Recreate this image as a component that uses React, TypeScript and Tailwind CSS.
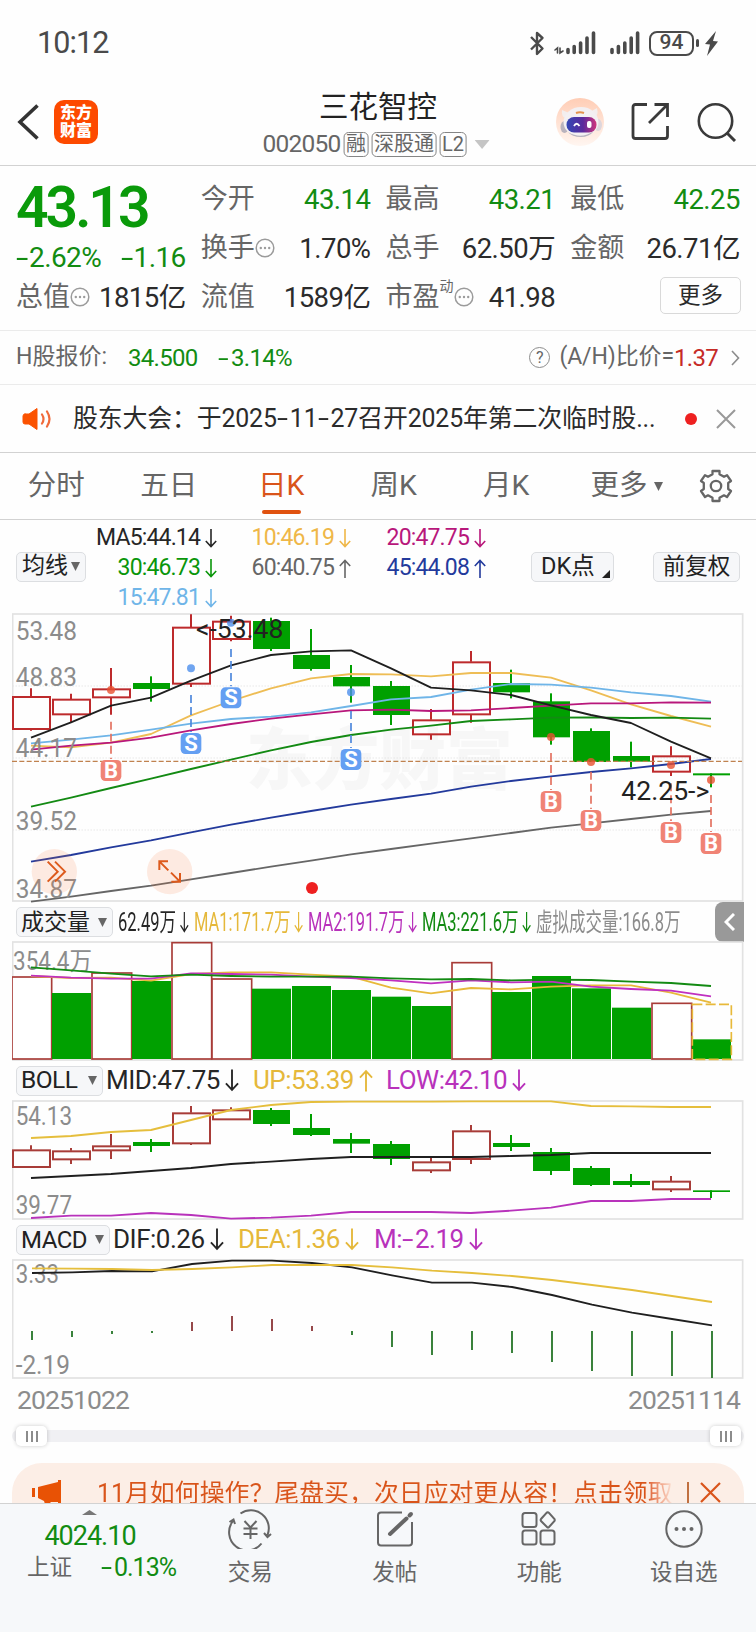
import React from 'react';

type Candle = [up: boolean, high: number, top: number, bottom: number, low: number];

// Chart drawings use a grid of three units per pixel.
const STEP = 120;
const FIRST_X = 93;

const KLINE: Candle[] = [
    [true, 250, 274, 372, 377],
    [true, 266, 282, 328, 352],
    [true, 189, 251, 277, 329],
    [false, 214, 234, 252, 290],
    [true, 28, 66, 236, 246],
    [true, 32, 48, 102, 109],
    [false, 38, 48, 132, 138],
    [false, 72, 150, 192, 197],
    [false, 180, 216, 244, 293],
    [false, 228, 243, 330, 360],
    [true, 312, 344, 388, 404],
    [true, 138, 170, 328, 353],
    [false, 194, 234, 262, 280],
    [false, 265, 289, 397, 419],
    [false, 370, 378, 471, 471],
    [false, 410, 453, 470, 487],
    [true, 424, 452, 500, 513],
    [false, 505, 505, 511, 547],
];

const MA_LINES = [
    { color: '#eebd55', values: [422, 427, 413, 387, 331, 288, 250, 220, 207, 208, 214, 204, 204, 218, 256, 298, 333, 365] },
    { color: '#6fb5e8', values: [415, 404, 391, 374, 356, 342, 335, 322, 303, 283, 276, 254, 237, 239, 248, 262, 273, 290] },
    { color: '#b8177b', values: [434, 422, 413, 398, 376, 357, 341, 328, 316, 314, 318, 316, 309, 302, 295, 295, 292, 293] },
    { color: '#138a13', values: [605, 578, 549, 521, 492, 464, 436, 411, 390, 374, 362, 348, 343, 338, 337, 339, 338, 341] },
    { color: '#233a9c', values: [770, 750, 727, 706, 682, 659, 638, 618, 599, 582, 566, 545, 528, 514, 501, 490, 477, 462] },
    { color: '#666666', values: [890, 875, 858, 842, 823, 804, 785, 767, 748, 732, 716, 700, 684, 668, 655, 642, 629, 618] },
    { color: '#1f1f1f', values: [398, 352, 302, 278, 227, 181, 150, 139, 136, 190, 248, 256, 270, 301, 330, 354, 410, 460] },
];

const SIGNALS = [
    { day: 2, kind: 'B', dot: 255, from: 350, box: 465 },
    { day: 4, kind: 'S', dot: 190, from: 270, box: 384 },
    { day: 5, kind: 'S', dot: 53, from: 132, box: 247 },
    { day: 8, kind: 'S', dot: 262, from: 318, box: 432 },
    { day: 13, kind: 'B', dot: 396, from: 444, box: 558 },
    { day: 14, kind: 'B', dot: 471, from: 500, box: 615 },
    { day: 16, kind: 'B', dot: 480, from: 535, box: 651 },
    { day: 17, kind: 'B', dot: 525, from: 570, box: 684 },
];

const VOLUMES: [boolean, number][] = [
    [true, 231], [false, 279], [true, 219], [false, 243], [true, 128], [true, 237],
    [false, 266], [false, 258], [false, 270], [false, 290], [false, 318], [true, 188],
    [false, 276], [false, 228], [false, 265], [false, 323], [true, 310], [false, 418],
];

const VOLUME_LINES = [
    { color: '#e8b93a', values: [228, 234, 233, 242, 222, 217, 217, 224, 230, 263, 280, 264, 268, 260, 256, 256, 278, 308] },
    { color: '#c030c0', values: [227, 233, 236, 236, 220, 222, 224, 230, 234, 241, 250, 241, 247, 245, 260, 267, 272, 289] },
    { color: '#138a13', values: [202, 211, 221, 229, 224, 228, 230, 230, 230, 235, 238, 237, 241, 239, 240, 245, 249, 258] },
];

const BOLL_CANDLES: Candle[] = [
    [true, 736, 749, 801, 801],
    [true, 744, 752, 778, 792],
    [true, 702, 737, 751, 777],
    [false, 717, 726, 738, 756],
    [true, 618, 638, 730, 735],
    [true, 622, 629, 658, 658],
    [false, 624, 630, 672, 678],
    [false, 642, 684, 705, 708],
    [false, 699, 717, 731, 759],
    [false, 723, 732, 777, 795],
    [true, 770, 785, 811, 819],
    [true, 675, 692, 777, 792],
    [false, 705, 729, 741, 753],
    [false, 744, 756, 813, 825],
    [false, 798, 804, 855, 858],
    [false, 822, 843, 855, 861],
    [true, 828, 843, 868, 876],
    [false, 871, 871, 876, 894],
];

const BOLL_LINES = [
    { color: '#e5be3c', values: [714, 708, 696, 690, 660, 630, 615, 606, 605, 605, 605, 604, 604, 604, 618, 619, 621, 621] },
    { color: '#1f1f1f', values: [834, 828, 822, 813, 804, 792, 785, 777, 771, 771, 771, 771, 768, 765, 759, 759, 759, 759] },
    { color: '#b832bb', values: [954, 947, 947, 939, 945, 956, 953, 947, 936, 936, 936, 939, 932, 923, 903, 903, 897, 897] },
];

const MACD_LINES = [
    { color: '#1f1f1f', values: [159, 157, 153, 154, 132, 122, 122, 129, 142, 166, 188, 188, 201, 225, 254, 278, 297, 316] },
    { color: '#e5be3c', values: [145, 146, 147, 150, 147, 142, 135, 135, 135, 142, 152, 159, 168, 180, 195, 210, 228, 246] },
];

const MACD_BARS = [360, 351, 342, 339, 306, 288, 297, 318, 345, 381, 405, 390, 399, 426, 453, 468, 468, 474];

const TABS = ['分时', '五日', '日K', '周K', '月K'];

const Line = ({ values, color, offset = FIRST_X, width = 5.5 }: { values: number[]; color: string; offset?: number; width?: number }) => (
    <polyline
        points={values.map((v, i) => `${offset + i * STEP},${v}`).join(' ')}
        fill="none"
        stroke={color}
        strokeWidth={width}
        strokeLinejoin="round"
    />
);

const Candles = ({ data, red }: { data: Candle[]; red: string }) => (
    <g>
        {data.map(([up, high, top, bottom, low], i) => {
            const x = FIRST_X + i * STEP;
            return up ? (
                <g key={i} stroke={red} strokeWidth={6} fill="none">
                    <path d={`M${x} ${high}V${top}M${x} ${bottom}V${low}`} />
                    <rect x={x - 54} y={top + 2} width={111} height={bottom - top - 2} />
                </g>
            ) : (
                <g key={i} fill="#00a000">
                    <rect x={x - 54} y={top} width={111} height={bottom - top} />
                    <rect x={x - 3} y={high} width={6} height={low - high} />
                </g>
            );
        })}
    </g>
);

const ChartText = ({ x, y, w, children, color = '#8c8c8c' }: { x: number; y: number; w: number; children: string; color?: string }) => (
    <text x={x} y={y} textLength={w} lengthAdjust="spacingAndGlyphs" fontSize={75} fill={color}>
        {children}
    </text>
);

const Arrow = ({ up = false, w = 12, h = 19 }: { up?: boolean; w?: number; h?: number }) => (
    <svg width={w} height={h} viewBox="0 0 12 19" className={up ? 'ml-[5px] shrink-0' : 'ml-[5px] shrink-0 rotate-180'} fill="none" stroke="currentColor" strokeWidth="1.6">
        <path d="M6 19V1.5M.8 7L6 1.5L11.2 7" />
    </svg>
);

// Roboto's hyphen is short, so the sign is stretched to a minus.
const Minus = () => <span className="inline-block w-[13px] origin-left scale-x-[1.6]">-</span>;

const InfoDot = () => (
    <svg width="20" height="20" viewBox="0 0 20 20" className="mt-[-2px] shrink-0" fill="none" stroke="#9b9b9b" strokeWidth="1.5">
        <circle cx="10" cy="10" r="8.8" />
        <g fill="#9b9b9b" stroke="none">
            <circle cx="5.8" cy="10" r="1.2" />
            <circle cx="10" cy="10" r="1.2" />
            <circle cx="14.2" cy="10" r="1.2" />
        </g>
    </svg>
);

const Triangle = ({ color = '#666', w = 9, h = 9 }: { color?: string; w?: number; h?: number }) => (
    <svg width={w} height={h} viewBox="0 0 10 10" preserveAspectRatio="none" className="shrink-0">
        <path d="M0 0H10L5 10Z" fill={color} />
    </svg>
);

const Quote = ({ label, value, extra, green = false }: { label: string; value: string; extra?: React.ReactNode; green?: boolean }) => (
    <div className="flex h-[49px] items-center justify-between whitespace-nowrap">
        <span className="flex items-center text-[27px] text-[#666]">
            {label}
            {extra}
        </span>
        <span className={green ? 'text-[27.5px] tracking-[-0.5px] text-[#128c12]' : 'text-[27.5px] tracking-[-0.5px] text-[#2b2b2b]'}>{value}</span>
    </div>
);

const StatusBar = () => (
    <div className="flex h-[86px] shrink-0 items-center justify-between pr-[38px] pl-[37px] text-[#4a4a4a]">
        <span className="text-[30.5px] tracking-[-0.9px]">10:12</span>
        <div className="flex items-center">
            <svg width="16" height="25" viewBox="0 0 16 25" fill="none" stroke="currentColor" strokeWidth="2.4" strokeLinejoin="round">
                <path d="M2 6L13.5 17.5L8 23V2L13.5 7L2 18.5" />
            </svg>
            <svg width="43" height="24" viewBox="0 0 43 24" className="ml-[9px]" fill="none" stroke="currentColor" strokeLinecap="round">
                <path d="M1 19L3.5 17V22M6 17V22L9 20" strokeWidth="1.6" />
                <path d="M14 18.5V21.5M20.2 15.5V21.5M26.6 12V21.5M33 7V21.5M39.5 2V21.5" strokeWidth="3.6" />
            </svg>
            <svg width="31" height="24" viewBox="0 0 31 24" className="ml-[13px]" fill="none" stroke="currentColor" strokeLinecap="round">
                <path d="M2 18.5V21.5M8.4 15.5V21.5M14.8 12V21.5M21.2 7V21.5M27.6 2V21.5" strokeWidth="3.6" />
            </svg>
            <span className="ml-[8px] flex h-[25px] w-[45px] items-center justify-center rounded-[8px] border-2 border-[#4a4a4a] text-[21px] font-medium">94</span>
            <span className="ml-[2px] h-[8px] w-[3px] rounded bg-[#4a4a4a]" />
            <svg width="13" height="25" viewBox="0 0 13 25" className="ml-[6px]" fill="currentColor">
                <path d="M11 0L0 13L5 13.5L2 25L13 10.5L8 10Z" />
            </svg>
        </div>
    </div>
);

const Tag = ({ children }: { children: string }) => (
    <span className="flex h-[25px] items-center rounded-[5px] border-[1.5px] border-[#858585] px-[1.5px] text-[20px] leading-none text-[#666]">{children}</span>
);

const Header = () => (
    <header className="relative flex h-[80px] shrink-0 items-center border-b border-[#d2d2d2] px-[17px]">
        <svg width="22" height="36" viewBox="0 0 22 36" className="mt-[-8px]" fill="none" stroke="#333" strokeWidth="3.6">
            <path d="M20.5 1.5L3 18L20.5 34.5" />
        </svg>
        <div className="mt-[-8px] ml-[15px] flex h-[44px] w-[44px] flex-col items-center justify-center rounded-[10px] bg-[#fd4a00] text-[16px] leading-[18px] font-black text-white">
            <span>东方</span>
            <span>财富</span>
        </div>
        <div className="absolute top-[2px] left-1/2 flex -translate-x-1/2 flex-col items-center">
            <h1 className="h-[41px] text-[29.5px] leading-[38px] font-normal text-[#222]">三花智控</h1>
            <div className="ml-[-4px] flex items-center gap-[3px] whitespace-nowrap">
                <span className="text-[24.5px] leading-[30px] tracking-[-0.8px] text-[#666]">002050</span>
                <Tag>融</Tag>
                <Tag>深股通</Tag>
                <Tag>L2</Tag>
                <span className="ml-[5px]">
                    <Triangle color="#c5c5c5" w={15} h={9} />
                </span>
            </div>
        </div>
        <div className="mt-[-8px] mr-[2px] ml-auto flex items-center">
            <svg width="48" height="48" viewBox="0 0 48 48">
                <defs>
                    <linearGradient id="halo" x1="0" y1="0" x2="0" y2="1">
                        <stop offset="0" stopColor="#ffcdb5" />
                        <stop offset="1" stopColor="#fff6f1" />
                    </linearGradient>
                    <linearGradient id="visor">
                        <stop offset="0" stopColor="#3448b5" />
                        <stop offset="0.55" stopColor="#5b2a9c" />
                        <stop offset="1" stopColor="#d0347c" />
                    </linearGradient>
                </defs>
                <circle cx="24" cy="24" r="24" fill="url(#halo)" />
                <path d="M6 12Q5 19 10 20L13 15ZM41 10Q43 18 38 19L34 14Z" fill="#f3eeee" />
                <ellipse cx="8.5" cy="29" rx="4" ry="6" fill="#b9b3bd" />
                <ellipse cx="42" cy="27" rx="4" ry="6" fill="#ddd6dc" />
                <ellipse cx="25" cy="24" rx="17.5" ry="15" fill="#f3f0f2" />
                <path d="M12 34Q25 42 38 33Q33 39 25 39Q16 39 12 34Z" fill="#b7b3be" />
                <path d="M20 15Q24 13.5 28 15" stroke="#e3924e" strokeWidth="2" fill="none" />
                <rect x="10.5" y="19" width="30" height="15.5" rx="7.5" fill="url(#visor)" />
                <path d="M18 28Q20.5 23.5 23.5 28" stroke="#fff" strokeWidth="1.8" fill="none" />
                <rect x="31" y="23" width="4.5" height="7" rx="2" fill="#fff" />
            </svg>
            <svg width="39" height="39" viewBox="0 0 39 39" className="ml-[27px]" fill="none" stroke="#3a3a3a" strokeWidth="2.8">
                <path d="M16 2.5H4.5Q2 2.5 2 5V34Q2 36.500 4.5 36.5H34Q36.5 36.5 36.5 34V24M36.5 15V2.5H23.5M36.5 2.5L18 21" />
            </svg>
            <svg width="40" height="40" viewBox="0 0 40 40" className="ml-[27px]" fill="none" stroke="#3a3a3a" strokeWidth="2.6">
                <circle cx="18.5" cy="19" r="16.7" />
                <path d="M30 31L38 39" strokeWidth="3" />
            </svg>
        </div>
    </header>
);

const QuotePanel = () => (
    <section className="grid h-[165px] shrink-0 grid-cols-4 gap-x-[15px] border-b border-[#ebebeb] px-4 pt-[9px]">
        <div className="text-[#128c12]">
            <div className="flex h-[65px] items-center text-[57px] leading-none font-semibold tracking-[-3px] text-[#0a9a0a]">43.13</div>
            <div className="flex h-[33px] items-center justify-between pt-[3px] text-[28px] tracking-[-0.6px] whitespace-nowrap">
                <span><Minus />2.62%</span>
                <span><Minus />1.16</span>
            </div>
            <Quote label="总值" value="1815亿" extra={<InfoDot />} />
        </div>
        <div>
            <Quote label="今开" value="43.14" green />
            <Quote label="换手" value="1.70%" extra={<InfoDot />} />
            <Quote label="流值" value="1589亿" />
        </div>
        <div>
            <Quote label="最高" value="43.21" green />
            <Quote label="总手" value="62.50万" />
            <Quote
                label="市盈"
                value="41.98"
                extra={
                    <>
                        <sup className="top-[-12px] text-[14px]">动</sup>
                        <InfoDot />
                    </>
                }
            />
        </div>
        <div>
            <Quote label="最低" value="42.25" green />
            <Quote label="金额" value="26.71亿" />
            <button className="mt-[4px] mr-[-1px] ml-auto flex h-[37px] w-[81px] items-center justify-center rounded-[5px] border border-[#d9d9d9] text-[22.5px] text-[#2b2b2b]">更多</button>
        </div>
    </section>
);

const HShareRow = () => (
    <section className="flex h-[54px] shrink-0 items-center border-b border-[#ebebeb] pr-[16px] pl-[16px] text-[23px] whitespace-nowrap text-[#666]">
        <span className="w-[112px]">H股报价:</span>
        <span className="w-[90px] text-[24px] tracking-[-0.7px] text-[#128c12]">34.500</span>
        <span className="text-[24px] tracking-[-0.7px] text-[#128c12]"><Minus />3.14%</span>
        <span className="ml-auto flex h-[21px] w-[21px] items-center justify-center rounded-full border-[1.5px] border-[#8c8c8c] text-[16px]">?</span>
        <span className="ml-[9px] tracking-[-0.1px]">(A/H)比价=</span>
        <span className="text-[24px] tracking-[-0.7px] text-[#c62b26]">1.37</span>
        <svg width="9" height="16" viewBox="0 0 9 16" className="ml-[13px]" fill="none" stroke="#8c8c8c" strokeWidth="1.6">
            <path d="M1 1L7.5 8L1 15" />
        </svg>
    </section>
);

const NoticeRow = () => (
    <section className="flex h-[68px] shrink-0 items-center border-b border-[#d2d2d2] pr-[20px] pl-[22px] whitespace-nowrap">
        <svg width="30" height="24" viewBox="0 0 30 24" fill="none" stroke="#f06a3a" strokeWidth="2.2" strokeLinecap="round">
            <path d="M3 7H7L15 1.5V22.5L7 17H3Q1 17 1 15V9Q1 7 3 7Z" fill="#fb5200" stroke="#fb5200" strokeWidth="1" />
            <path d="M20 7.5Q23 12 20 16.5M25 4.5Q30 12 25 19.5" />
        </svg>
        <span className="ml-[21px] text-[24.9px] tracking-[-0.15px] text-[#2b2b2b]">
            股东大会：于2025<Minus />11<Minus />27召开2025年第二次临时股...
        </span>
        <span className="ml-auto h-[12px] w-[12px] rounded-full bg-[#ee2020]" />
        <svg width="20" height="20" viewBox="0 0 20 20" className="ml-[19px]" stroke="#999" strokeWidth="2">
            <path d="M1 1L19 19M19 1L1 19" />
        </svg>
    </section>
);

const TabBar = () => (
    <nav className="flex h-[67px] shrink-0 items-center border-b border-[#d2d2d2] pt-[1px] text-[28.5px] whitespace-nowrap text-[#666]">
        {TABS.map(tab => (
            <div key={tab} className={tab === '日K' ? 'relative flex w-[112.5px] justify-center text-[#d9541a]' : 'flex w-[112.5px] justify-center'}>
                {tab}
                {tab === '日K' && <span className="absolute bottom-[-6px] h-[4px] w-[39px] rounded-full bg-[#e0520f]" />}
            </div>
        ))}
        <div className="ml-[28px] flex items-center gap-[6px]">
            更多
            <Triangle />
        </div>
        <svg width="34" height="34" viewBox="0 0 34 34" className="ml-[36px] mt-[-2px]" fill="none" stroke="#666" strokeWidth="2.3" strokeLinejoin="round">
            <path d="M13.5 2H20.5V5.2L25 7.8L28 6.2L32 12L29.2 14V20L32 22L28 28L25 26.3L20.5 28.8V32H13.5V28.8L9 26.3L6 28L2 22L4.8 20V14L2 12L6 6.2L9 7.8L13.5 5.2Z" />
            <circle cx="17" cy="17" r="5.2" />
        </svg>
    </nav>
);

const MaLegend = () => (
    <section className="flex h-[93px] shrink-0 items-center pr-[16px] pl-[16px] text-[23px] whitespace-nowrap">
        <button className="flex h-[30px] w-[70px] items-center justify-center gap-[3px] rounded-[5px] border border-[#dcdee1] bg-[#f6f7f9] text-[#222]">
            均线
            <Triangle />
        </button>
        <div className="grid h-full w-[400px] grid-cols-[131px_134px_135px] grid-rows-3 items-center justify-items-end pt-[3px] tracking-[-0.85px]">
            <span className="flex items-center text-[#262626]">MA5:44.14<Arrow /></span>
            <span className="flex items-center text-[#efb748]">10:46.19<Arrow /></span>
            <span className="flex items-center text-[#b8177b]">20:47.75<Arrow /></span>
            <span className="flex items-center text-[#0a960a]">30:46.73<Arrow /></span>
            <span className="flex items-center text-[#666]">60:40.75<Arrow up /></span>
            <span className="flex items-center text-[#233a9c]">45:44.08<Arrow up /></span>
            <span className="flex items-center text-[#6fb5e8]">15:47.81<Arrow /></span>
        </div>
        <button className="relative ml-auto flex h-[30px] w-[83px] items-center rounded-[5px] border border-[#dcdee1] bg-[#f6f7f9] pl-[9px] text-[23.5px] text-[#222]">
            DK点
            <svg width="8" height="8" viewBox="0 0 8 8" className="absolute right-[3px] bottom-[3px]">
                <path d="M8 0V8H0Z" fill="#222" />
            </svg>
        </button>
        <button className="ml-[39px] flex h-[30px] w-[87px] items-center justify-center rounded-[5px] border border-[#dcdee1] bg-[#f6f7f9] text-[22.5px] text-[#222]">前复权</button>
    </section>
);

const KlineChart = () => (
    <svg width="732" height="290" viewBox="36 24 2196 870" className="ml-3 shrink-0">
        <text x="738" y="538" textLength="800" fontSize="200" fontWeight="900" fill="#f7f7f7">东方财富</text>
        <path d="M38 243H2228M38 459H2228M38 675H2228" stroke="#dcdcdc" strokeWidth="3" strokeDasharray="3 6" />
        <rect x="38" y="27" width="2190" height="861" fill="none" stroke="#e2e2e2" strokeWidth="5" />
        <Candles data={KLINE} red="#bd2a2c" />
        {MA_LINES.map(line => (
            <Line key={line.color} {...line} />
        ))}
        <path d="M36 469H2226" stroke="#c0824f" strokeWidth="4" strokeDasharray="15 7" />
        <ChartText x={47} y={104} w={184}>53.48</ChartText>
        <ChartText x={47} y={242} w={184}>48.83</ChartText>
        <ChartText x={47} y={457} w={184}>44.17</ChartText>
        <ChartText x={47} y={674} w={184}>39.52</ChartText>
        <ChartText x={47} y={878} w={184}>34.87</ChartText>
        {SIGNALS.map(({ day, kind, dot, from, box }) => {
            const x = FIRST_X + day * STEP;
            const fill = kind === 'B' ? '#f08375' : '#649ff2';
            return (
                <g key={day}>
                    <circle cx={x} cy={dot} r="12" fill={kind === 'B' ? '#e8502f' : '#4c8fec'} opacity="0.8" />
                    <path d={`M${x} ${from}V${box - 3}`} stroke={kind === 'B' ? '#e3705f' : '#4c86dc'} strokeWidth="5" strokeDasharray="24 12" />
                    <rect x={x - 31} y={box} width="62" height="63" rx="14" fill={fill} />
                    <text x={x} y={box + 54} textAnchor="middle" fontSize="66" fontWeight="700" fill="#fff">{kind}</text>
                </g>
            );
        })}
        <ChartText x={588} y={98} w={262} color="#222">{'<-53.48'}</ChartText>
        <ChartText x={1864} y={584} w={264} color="#222">{'42.25->'}</ChartText>
        <circle cx="163" cy="800" r="68" fill="#fb7b3f" opacity="0.15" />
        <circle cx="509" cy="800" r="68" fill="#fb7b3f" opacity="0.15" />
        <g fill="none" stroke="#dd5a1c" strokeWidth="6">
            <path d="M143 770L173 800L143 830M165 770L195 800L165 830" />
            <path d="M478 795V769H504M478 769L505 796M514 830H540V804M540 830L513 803" />
        </g>
        <circle cx="936" cy="849" r="18" fill="#ee2020" />
    </svg>
);

const IndicatorSelect = ({ name, className }: { name: string; className: string }) => (
    <button className={`flex h-[30px] shrink-0 items-center justify-between rounded-[5px] border border-[#dcdee1] bg-[#f6f7f9] pr-[5px] pl-[4px] text-[#222] ${className}`}>
        {name}
        <Triangle />
    </button>
);

// Volume figures are set in condensed glyphs to fit on one line.
const Condensed = ({ className, children }: { className: string; children: React.ReactNode }) => (
    <span className={`h-[34px] shrink-0 ${className}`}>
        <span className="flex h-full w-max origin-left scale-x-[0.66] items-center">{children}</span>
    </span>
);

const VolumeRow = () => (
    <div className="flex h-[38px] shrink-0 items-center pl-4 text-[25px] leading-none whitespace-nowrap">
        <IndicatorSelect name="成交量" className="w-[97px] text-[23px]" />
        <Condensed className="ml-[5px] w-[76px] text-[#262626]">62.49万<Arrow w={15} h={21} /></Condensed>
        <Condensed className="w-[114px] text-[#e5b83a]">MA1:171.7万<Arrow w={15} h={21} /></Condensed>
        <Condensed className="w-[114px] text-[#b832bb]">MA2:191.7万<Arrow w={15} h={21} /></Condensed>
        <Condensed className="w-[114px] text-[#138a13]">MA3:221.6万<Arrow w={15} h={21} /></Condensed>
        <Condensed className="w-[140px] text-[#8c8c8c]">虚拟成交量:166.8万</Condensed>
        <button className="mr-[12px] ml-auto flex h-[40px] w-[29px] items-center justify-center rounded-l-[8px] bg-[#999]">
            <svg width="11" height="18" viewBox="0 0 11 18" fill="none" stroke="#fff" strokeWidth="3">
                <path d="M10 1L2 9L10 17" />
            </svg>
        </button>
    </div>
);

const VolumeChart = () => (
    <svg width="732" height="120" viewBox="36 123 2196 360" className="ml-3 shrink-0">
        <rect x="38" y="126" width="2190" height="354" fill="none" stroke="#e2e2e2" strokeWidth="5" />
        {VOLUMES.map(([up, top], i) =>
            up ? (
                <rect key={i} x={36 + i * STEP} y={top} width="119" height={477 - top} fill="#fff" stroke="#a83c38" strokeWidth="5" />
            ) : (
                <rect key={i} x={36 + i * STEP} y={top} width="117" height={477 - top} fill="#00a000" />
            ),
        )}
        <rect x="2077" y="313" width="117" height="165" fill="none" stroke="#e8b93a" strokeWidth="5" strokeDasharray="30 10" />
        <ChartText x={39} y={210} w={237}>354.4万</ChartText>
        {VOLUME_LINES.map(line => (
            <Line key={line.color} {...line} />
        ))}
    </svg>
);

const BollRow = () => (
    <div className="flex h-[39px] shrink-0 items-center pl-4 text-[26px] tracking-[-0.5px] whitespace-nowrap">
        <IndicatorSelect name="BOLL" className="w-[87px] text-[24.5px]" />
        <span className="ml-[3px] flex w-[147px] items-center text-[#262626]">MID:47.75<Arrow w={14} h={23} /></span>
        <span className="flex w-[133px] items-center text-[#e5b83a]">UP:53.39<Arrow up w={14} h={23} /></span>
        <span className="flex items-center text-[#b832bb]">LOW:42.10<Arrow w={14} h={23} /></span>
    </div>
);

const BollChart = () => (
    <svg width="732" height="120" viewBox="36 600 2196 360" className="ml-3 shrink-0">
        <rect x="38" y="603" width="2190" height="354" fill="none" stroke="#e2e2e2" strokeWidth="5" />
        <Candles data={BOLL_CANDLES} red="#a83c38" />
        <ChartText x={47} y={674} w={169}>54.13</ChartText>
        <ChartText x={47} y={943} w={169}>39.77</ChartText>
        {BOLL_LINES.map(line => (
            <Line key={line.color} {...line} />
        ))}
    </svg>
);

const MacdRow = () => (
    <div className="flex h-[39px] shrink-0 items-center pl-4 text-[26px] tracking-[-0.5px] whitespace-nowrap">
        <IndicatorSelect name="MACD" className="w-[94px] text-[24px]" />
        <span className="ml-[3px] flex w-[125px] items-center text-[#262626]">DIF:0.26<Arrow w={14} h={23} /></span>
        <span className="flex w-[136px] items-center text-[#e5b83a]">DEA:1.36<Arrow w={14} h={23} /></span>
        <span className="flex items-center text-[#b832bb]">M:<Minus />2.19<Arrow w={14} h={23} /></span>
    </div>
);

const MacdChart = () => (
    <svg width="732" height="120" viewBox="36 117 2196 360" className="ml-3 shrink-0">
        <rect x="38" y="120" width="2190" height="354" fill="none" stroke="#e2e2e2" strokeWidth="5" />
        {MACD_BARS.map((end, i) => (
            <path key={i} d={`M${96 + i * STEP} 333V${end}`} stroke={end < 333 ? '#96484a' : '#3a823c'} strokeWidth="6" />
        ))}
        <ChartText x={47} y={190} w={130}>3.33</ChartText>
        <ChartText x={47} y={461} w={163}>-2.19</ChartText>
        {MACD_LINES.map(line => (
            <Line key={line.color} {...line} offset={96} />
        ))}
    </svg>
);

const Grip = () => (
    <span className="flex h-[20px] w-[31px] items-center justify-center gap-[3px] rounded-[5px] bg-white shadow-[0_0_4px_rgba(0,0,0,0.2)]">
        <i className="h-[11px] w-[2px] bg-[#8c8c8c]" />
        <i className="h-[11px] w-[2px] bg-[#8c8c8c]" />
        <i className="h-[11px] w-[2px] bg-[#8c8c8c]" />
    </span>
);

const DateRange = () => (
    <>
        <div className="flex h-[41px] shrink-0 items-center justify-between px-[17px] pt-[1px] text-[26.5px] tracking-[-0.9px] text-[#8c8c8c]">
            <span>20251022</span>
            <span className="mr-[-1px]">20251114</span>
        </div>
        <div className="mx-3 mt-[10px] flex h-[12px] shrink-0 items-center justify-between rounded-full bg-[#f0f0f3] pr-[3px] pl-[4px]">
            <Grip />
            <Grip />
        </div>
    </>
);

const Promo = () => (
    <div className="mx-3 mt-[21px] flex h-[40px] shrink-0 items-start overflow-hidden rounded-t-[30px] bg-[#fceee6] pl-[20px] whitespace-nowrap">
        <svg width="30" height="24" viewBox="0 0 30 24" className="mt-[17px] shrink-0" fill="#e85205">
            <path d="M0 8H3V17H0ZM6 7L26 2V0H29V24H26V22H19L17 24H13L12 21L6 18Z" />
        </svg>
        <span className="mt-[12px] ml-[35px] w-[578px] shrink-0 overflow-hidden bg-gradient-to-r from-[#d9541a] from-95% to-[#fceee6] bg-clip-text text-[24.9px] text-transparent">
            11月如何操作？尾盘买，次日应对更从容！点击领取
        </span>
        <span className="mt-[19px] ml-[12px] h-[21px] w-[1.5px] shrink-0 bg-[#c07040]" />
        <svg width="21" height="21" viewBox="0 0 21 21" className="mt-[19px] ml-[11px] shrink-0" stroke="#d9541a" strokeWidth="2.2">
            <path d="M1 1L20 20M20 1L1 20" />
        </svg>
    </div>
);

const NavItem = ({ label, children }: { label: string; children: React.ReactNode }) => (
    <div className="flex flex-1 flex-col items-center pt-[5px] text-[22.5px] text-[#666]">
        <svg width="44" height="40" viewBox="0 0 44 40" fill="none" stroke="#666" strokeWidth="2">
            {children}
        </svg>
        <span className="mt-[6px] leading-[34px]">{label}</span>
    </div>
);

const BottomBar = () => (
    <footer className="flex h-[129px] shrink-0 border-t border-[#d2d2d2] bg-[#f6f8fa]">
        <div className="flex w-[178px] flex-col items-center pt-[6px] whitespace-nowrap">
            <span className="flex rotate-180">
                <Triangle w={15} h={5} color="#777" />
            </span>
            <div className="mt-[5px] pl-[2px] text-[27px] leading-[32px] tracking-[-1px] text-[#128c12]">4024.10</div>
            <div className="flex w-full items-center justify-between pr-[2px] pl-[27px] text-[22.5px] leading-[31px] text-[#666]">
                上证
                <span className="text-[25px] tracking-[-1px] text-[#128c12]"><Minus />0.13%</span>
            </div>
        </div>
        <NavItem label="交易">
            <path d="M12.5 4.5A18 18 0 0 1 39.5 26M33.5 34.5A18 18 0 0 1 5 12M1.5 13L5.500 10.5L7 15M36 24L39.5 28L43 25" />
            <path d="M16.5 12L22.5 18.5L28.5 12M22.5 18.5V30M15.5 19.5H29.5M15.5 25H29.5" />
        </NavItem>
        <NavItem label="发帖">
            <path d="M29 3.5H8Q5 3.5 5 6.5V33.5Q5 36.5 8 36.5H36Q39 36.5 39 33.5V13" />
            <path d="M17 25L33.5 9.5" strokeWidth="4" strokeLinecap="round" />
            <path d="M36.500 6.500L38 5" strokeWidth="4" strokeLinecap="round" />
        </NavItem>
        <NavItem label="功能">
            <rect x="5.5" y="4" width="14" height="14" rx="2.5" />
            <path d="M30.5 3.2Q31.5 3.2 32 4L37.5 10Q38 11 37.5 12L32 18Q31 19 30 18L24 12Q23.3 11 24 10L29.5 4Q30 3.2 30.5 3.2Z" />
            <rect x="5.5" y="21.5" width="14" height="14" rx="2.5" />
            <rect x="23.5" y="21.5" width="14" height="14" rx="2.5" />
        </NavItem>
        <NavItem label="设自选">
            <circle cx="22" cy="20" r="17.7" />
            <g fill="#666" stroke="none">
                <circle cx="14.5" cy="20" r="2" />
                <circle cx="22" cy="20" r="2" />
                <circle cx="29.5" cy="20" r="2" />
            </g>
        </NavItem>
    </footer>
);

const App: React.FC = () => {
    return (
        <div className="flex h-[1632px] w-[756px] flex-col overflow-hidden bg-[#fefefe] font-[Roboto,'Noto_Sans_CJK_SC',sans-serif]">
            <StatusBar />
            <Header />
            <QuotePanel />
            <HShareRow />
            <NoticeRow />
            <TabBar />
            <MaLegend />
            <KlineChart />
            <VolumeRow />
            <VolumeChart />
            <BollRow />
            <BollChart />
            <MacdRow />
            <MacdChart />
            <DateRange />
            <Promo />
            <BottomBar />
        </div>
    );
};

export default App;
